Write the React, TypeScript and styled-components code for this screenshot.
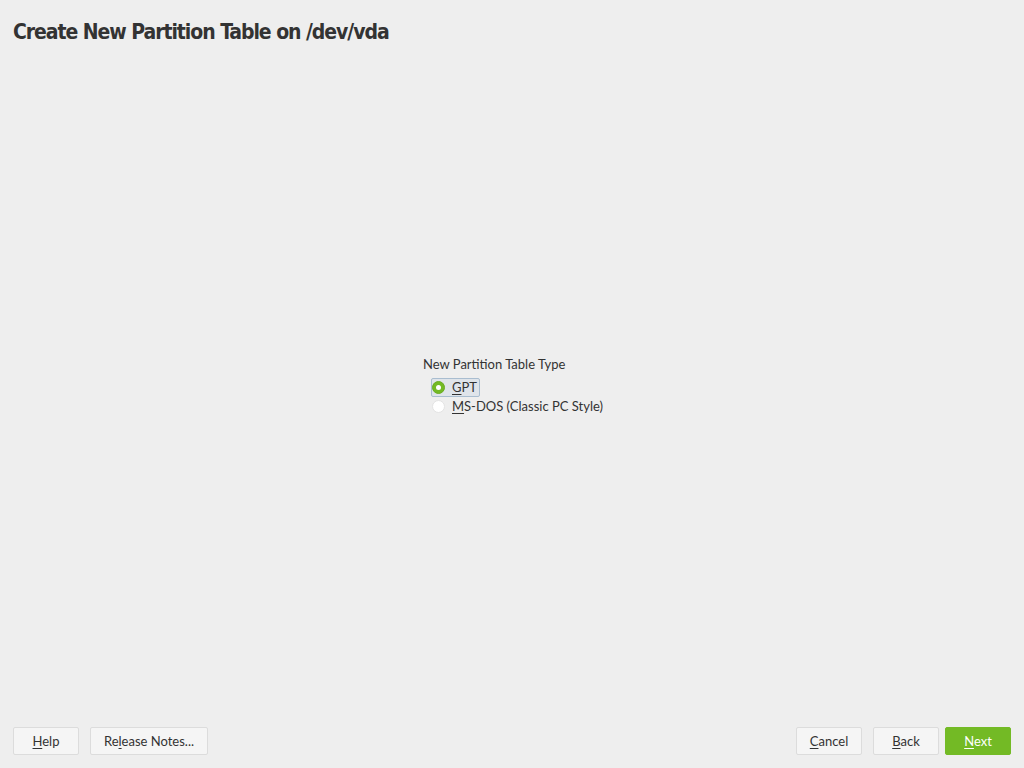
import React, { useState } from "react";
import styled, { createGlobalStyle } from "styled-components";

const Global = createGlobalStyle`
  html, body { margin: 0; padding: 0; background: #eeeeee; }
  body { font-family: "Lato", "Noto Sans", sans-serif; color: #333333; }
  * { box-sizing: border-box; }
`;

const Page = styled.div`
  width: 1024px;
  height: 768px;
  display: flex;
  flex-direction: column;
  background: #eeeeee;
  overflow: hidden;
`;

const Header = styled.h1`
  margin: 0;
  padding: 20px 0 0 13px;
  height: 60px;
  font-family: "DejaVu Sans Condensed", "Liberation Sans Narrow", sans-serif;
  font-weight: bold;
  font-size: 21px;
  color: #333333;
  letter-spacing: -1.05px;
`;

const Main = styled.div`
  flex: 1;
  display: flex;
  align-items: center;
  justify-content: center;
  padding-bottom: 16px;
`;

const Group = styled.div`
  display: flex;
  flex-direction: column;
  margin-left: 5px;
`;

const GroupLabel = styled.div`
  font-size: 13px;
  color: #333;
  margin-bottom: 6px;
`;

const Option = styled.label<{ $focused?: boolean }>`
  display: flex;
  align-items: center;
  gap: 7px;
  margin-left: 8px;
  padding: 1px 2px 1px 0;
  height: 19px;
  font-size: 13px;
  color: #333;
  align-self: flex-start;
  background: ${(p) => (p.$focused ? "#dfe4ea" : "transparent")};
  border: 1px solid ${(p) => (p.$focused ? "#a9bdd0" : "transparent")};
  border-radius: 2px;
`;

const Radio = styled.span<{ $checked?: boolean }>`
  width: 13px;
  height: 13px;
  border-radius: 50%;
  background: ${(p) => (p.$checked ? "#73ba25" : "#ffffff")};
  border: 1px solid ${(p) => (p.$checked ? "#6aac22" : "#e3e3e3")};
  display: flex;
  align-items: center;
  justify-content: center;
  &::after {
    content: "";
    width: 5px;
    height: 5px;
    border-radius: 50%;
    background: #ffffff;
    display: ${(p) => (p.$checked ? "block" : "none")};
  }
`;

const U = styled.span`
  text-decoration: underline;
  text-underline-offset: 2px;
`;

const Footer = styled.div`
  height: 41px;
  display: flex;
  align-items: flex-start;
  justify-content: space-between;
  padding: 0 13px 0 13px;
`;

const ButtonGroup = styled.div`
  display: flex;
  gap: 11px;
`;

const Button = styled.button<{ $w: number; $primary?: boolean }>`
  width: ${(p) => p.$w}px;
  height: 28px;
  margin-left: ${(p) => (p.$primary ? "-5px" : "0")};
  font-family: "Lato", "Noto Sans", sans-serif;
  font-size: 13px;
  color: ${(p) => (p.$primary ? "#ffffff" : "#333333")};
  background: ${(p) => (p.$primary ? "#73ba25" : "#f5f5f5")};
  border: 1px solid ${(p) => (p.$primary ? "#73ba25" : "#dcdcdc")};
  border-radius: 2px;
  padding: 0;
  cursor: pointer;
`;

export default function App() {
  const [sel, setSel] = useState("gpt");
  return (
    <Page>
      <Global />
      <Header>Create New Partition Table on /dev/vda</Header>
      <Main>
        <Group>
          <GroupLabel>New Partition Table Type</GroupLabel>
          <Option $focused onClick={() => setSel("gpt")}>
            <Radio $checked={sel === "gpt"} />
            <span><U>G</U>PT</span>
          </Option>
          <Option onClick={() => setSel("msdos")}>
            <Radio $checked={sel === "msdos"} />
            <span><U>M</U>S-DOS (Classic PC Style)</span>
          </Option>
        </Group>
      </Main>
      <Footer>
        <ButtonGroup>
          <Button $w={66}><U>H</U>elp</Button>
          <Button $w={118}>Re<U>l</U>ease Notes...</Button>
        </ButtonGroup>
        <ButtonGroup>
          <Button $w={66}><U>C</U>ancel</Button>
          <Button $w={66}><U>B</U>ack</Button>
          <Button $w={66} $primary><U>N</U>ext</Button>
        </ButtonGroup>
      </Footer>
    </Page>
  );
}
